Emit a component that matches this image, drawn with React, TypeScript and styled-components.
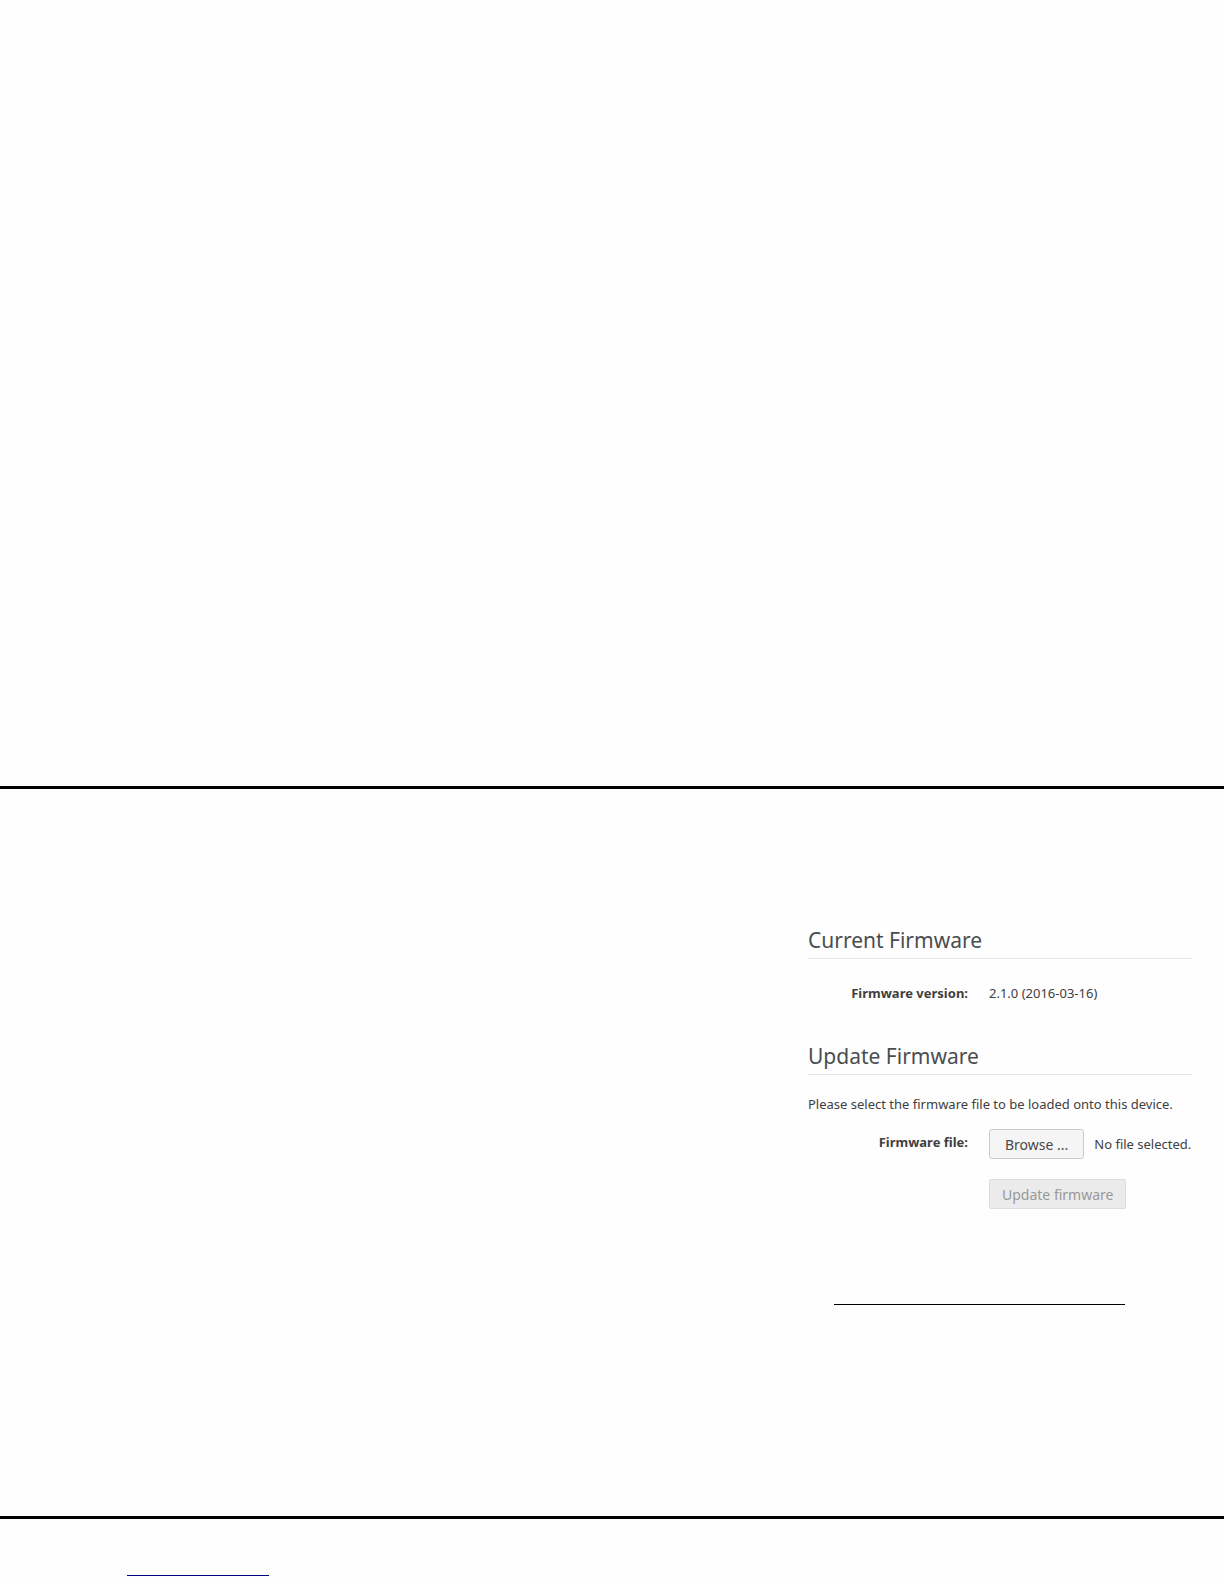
import React from "react";
import styled, { createGlobalStyle } from "styled-components";

const GlobalStyle = createGlobalStyle`
  *, *::before, *::after { box-sizing: border-box; }
  body {
    margin: 0;
    background: #fefefe;
    color: #404040;
    font: 13px/20px "Noto Sans", "Open Sans", sans-serif;
  }
`;

const Page = styled.div`
  display: flex;
  flex-direction: column;
`;

const BlankArea = styled.div`
  min-height: 786px;
`;

const Content = styled.main`
  display: flex;
  flex-direction: column;
  align-items: flex-end;
  min-height: 730px;
  padding: 137px 32px 0;
  border-top: 3px solid #000;
`;

const Footer = styled.footer`
  min-height: 68px;
  padding: 56px 127px 8px;
  border-top: 3px solid #000;
`;

const Panel = styled.div`
  display: flex;
  flex-direction: column;
  width: 384px;
`;

const Section = styled.section`
  display: flex;
  flex-direction: column;
  & + & { margin-top: 39px; }
`;

const Heading = styled.h2`
  margin: 0;
  padding-bottom: 4px;
  border-bottom: 1px solid #e4e4e4;
  color: #4a4d50;
  font-size: 21px;
  font-weight: 400;
  line-height: 28px;
`;

const Intro = styled.p`
  margin: 19px 0 15px;
`;

const Field = styled.div`
  display: grid;
  grid-template-columns: 160px 1fr;
  column-gap: 21px;
`;

const VersionList = styled.dl`
  display: grid;
  grid-template-columns: 160px 1fr;
  column-gap: 21px;
  margin: 24px 0 0;
`;

const Term = styled.dt`
  font-weight: 700;
  text-align: right;
`;

const Value = styled.dd`
  margin: 0;
`;

const Label = styled.label`
  padding-top: 3px;
  font-weight: 700;
  text-align: right;
`;

const Controls = styled.div`
  display: flex;
  flex-wrap: wrap;
  align-items: center;
  gap: 20px 10px;
`;

const FileStatus = styled.span`
  white-space: nowrap;
`;

const Button = styled.button`
  height: 30px;
  padding: 2px ${({ $wide }: { $wide?: boolean }) => ($wide ? 15 : 12)}px 0;
  border: 1px solid #cccccc;
  border-radius: 3px;
  background: #f5f5f5;
  color: #4a4a4a;
  font: inherit;
  font-size: 14px;
  white-space: nowrap;

  &:disabled {
    border-color: #dcdcdc;
    border-radius: 2px;
    background: #ebebeb;
    color: #999999;
  }
`;

const Divider = styled.hr`
  width: 291px;
  height: 1px;
  margin: 95px 67px 0;
  border: 0;
  background: #000;
`;

const FootRule = styled.hr`
  width: 142px;
  height: 1px;
  margin: 0;
  border: 0;
  background: #000080;
`;

export default function App() {
  return (
    <Page>
      <GlobalStyle />
      <BlankArea />
      <Content>
        <Panel>
          <Section>
            <Heading>Current Firmware</Heading>
            <VersionList>
              <Term>Firmware version:</Term>
              <Value>2.1.0 (2016-03-16)</Value>
            </VersionList>
          </Section>
          <Section>
            <Heading>Update Firmware</Heading>
            <Intro>Please select the firmware file to be loaded onto this device.</Intro>
            <Field>
              <Label htmlFor="firmware-file">Firmware file:</Label>
              <Controls>
                <Button id="firmware-file" type="button" $wide>Browse ...</Button>
                <FileStatus>No file selected.</FileStatus>
                <Button type="submit" disabled>Update firmware</Button>
              </Controls>
            </Field>
          </Section>
        </Panel>
        <Divider />
      </Content>
      <Footer>
        <FootRule />
      </Footer>
    </Page>
  );
}
